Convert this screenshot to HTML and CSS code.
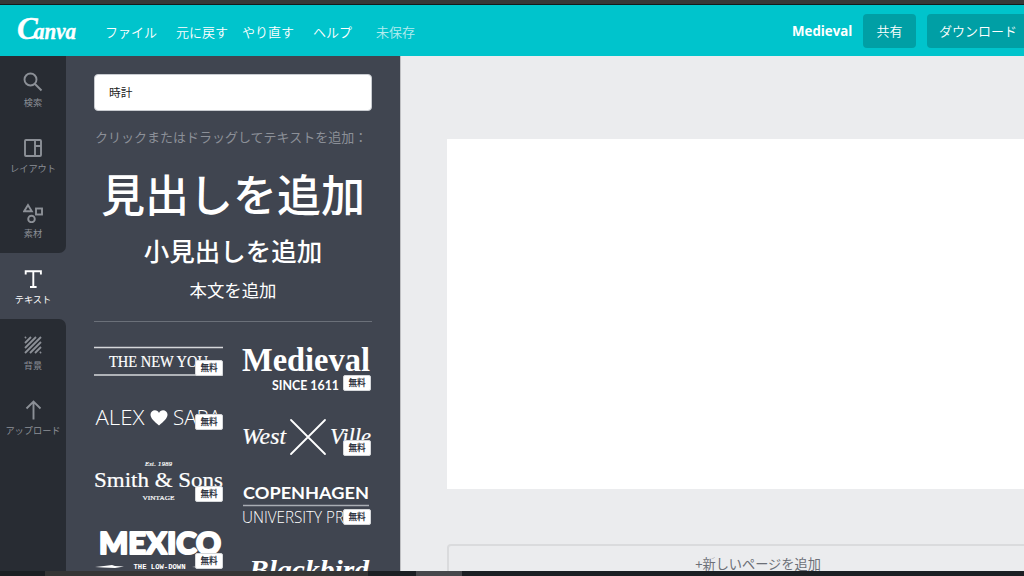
FILE: index.html
```html
<!DOCTYPE html>
<html lang="ja">
<head>
    <meta charset="UTF-8">
    <meta name="viewport" content="width=device-width, initial-scale=1.0">
    <title>Medieval</title>
    <link rel="stylesheet" href="styles.css">
</head>
<body>
    <div class="window-top"></div>
    <header class="header">
        <svg class="logo" width="62" height="40" viewBox="0 0 62 40">
            <text class="logo-text" y="28"><tspan font-size="31">C</tspan><tspan x="17" font-size="23" textLength="42" lengthAdjust="spacingAndGlyphs">anva</tspan></text>
        </svg>
        <nav class="menu">
            <a class="file">ファイル</a>
            <a class="undo">元に戻す</a>
            <a class="redo">やり直す</a>
            <a class="help">ヘルプ</a>
            <span class="unsaved">未保存</span>
        </nav>
        <div class="actions">
            <span class="design-name">Medieval</span>
            <button class="btn share">共有</button>
            <button class="btn download">ダウンロード</button>
        </div>
    </header>

    <main class="editor">
        <div class="sidebar">
            <div class="tabs tabs-above">
                <div class="tab">
                    <svg width="20" height="20" viewBox="0 0 20 20"><circle cx="7.5" cy="7.5" r="6"/><path d="M12 12l6.5 6.5"/></svg>
                    <span>検索</span>
                </div>
                <div class="tab">
                    <svg width="20" height="20" viewBox="0 0 20 20"><rect x="2" y="2" width="16" height="16" rx="1"/><path d="M12 2v16M12 8h6"/></svg>
                    <span>レイアウト</span>
                </div>
                <div class="tab">
                    <svg width="20" height="20" viewBox="0 0 20 20"><path d="M5 2L1.2 8.2h7.6z"/><rect x="13" y="5.5" width="6" height="6"/><circle cx="8.500" cy="16" r="3.300"/></svg>
                    <span>素材</span>
                </div>
            </div>
            <div class="tab active">
                <svg width="20" height="20" viewBox="0 0 20 20"><path d="M2.7 5.5V2.2h15.2v3.3M10.3 2v16M7 18h6.6"/></svg>
                <span>テキスト</span>
            </div>
            <div class="tabs tabs-below">
                <div class="tab">
                    <svg width="20" height="20" viewBox="0 0 20 20"><path d="M2 3l1-1M2 8l6-6M2 13L13 2M2 18L18 2M7 18L18 7M12 18l6-6M17 18l1-1"/></svg>
                    <span>背景</span>
                </div>
                <div class="tab">
                    <svg width="20" height="20" viewBox="0 0 20 20"><path d="M10.500 19.500V2M3.500 8.500l7-7 7 7"/></svg>
                    <span>アップロード</span>
                </div>
            </div>
        </div>

        <div class="panel">
            <input class="search" type="text" value="時計">
            <p class="hint">クリックまたはドラッグしてテキストを追加：</p>
            <div class="add-heading">見出しを追加</div>
            <div class="add-subheading">小見出しを追加</div>
            <div class="add-body">本文を追加</div>
            <div class="templates">
                <div class="column">
                    <div class="template new-you">
                        <svg width="129" height="30" viewBox="0 0 129 30">
                            <path d="M0 1.500h129M0 29h129" stroke="#d5d7da" stroke-width="1.500"/>
                            <text class="serif" x="15" y="21" font-size="17" textLength="99" lengthAdjust="spacingAndGlyphs">THE NEW YOU</text>
                        </svg>
                        <span class="badge">無料</span>
                    </div>
                    <div class="template alex">
                        <svg width="129" height="22" viewBox="0 0 129 22">
                            <text class="light" x="1.500" y="17" font-size="20" textLength="49" lengthAdjust="spacingAndGlyphs">ALEX</text>
                            <path d="M65 17.500C60.500 13.500 56.500 10.500 56.500 6.500c0-5 7-6 8.500-1.500C66.500.500 73.500 1.500 73.500 6.500c0 4-4 7-8.500 11z" fill="#fff"/>
                            <text class="light" x="79" y="17" font-size="20" textLength="48" lengthAdjust="spacingAndGlyphs">SARA</text>
                        </svg>
                        <span class="badge">無料</span>
                    </div>
                    <div class="template smith">
                        <svg width="129" height="44" viewBox="0 0 129 44">
                            <text class="serif italic" x="51" y="7.500" font-size="6.500" textLength="27">Est. 1989</text>
                            <text class="serif" x="0" y="28.500" font-size="21" textLength="129" lengthAdjust="spacingAndGlyphs">Smith &amp; Sons</text>
                            <text class="serif" x="48.500" y="41.500" font-size="6.800" textLength="32" lengthAdjust="spacingAndGlyphs">VINTAGE</text>
                        </svg>
                        <span class="badge">無料</span>
                    </div>
                    <div class="template mexico">
                        <svg width="129" height="39" viewBox="0 0 129 39">
                            <text class="heavy" x="5" y="24" font-size="31" textLength="122" lengthAdjust="spacingAndGlyphs">MEXICO</text>
                            <path d="M1 37l9-1 8-1 3 1 9 .500-9 1.500-12-.500zM98 37l8-1 8 1-8 .500z" fill="#fff"/>
                            <text class="mono" x="39.500" y="38.500" font-size="8" textLength="52" lengthAdjust="spacingAndGlyphs">THE LOW-DOWN</text>
                        </svg>
                        <span class="badge">無料</span>
                    </div>
                </div>
                <div class="column">
                    <div class="template medieval">
                        <svg width="129" height="45" viewBox="0 0 129 45">
                            <text class="blackletter" x="0" y="25" font-size="34" textLength="128" lengthAdjust="spacingAndGlyphs">Medieval</text>
                            <text class="bold" x="30" y="44" font-size="13" textLength="67" lengthAdjust="spacingAndGlyphs">SINCE 1611</text>
                        </svg>
                        <span class="badge">無料</span>
                    </div>
                    <div class="template west">
                        <svg width="129" height="37" viewBox="0 0 129 37">
                            <text class="serif italic" x="0" y="25" font-size="23" textLength="44" lengthAdjust="spacingAndGlyphs">West</text>
                            <path d="M49 1l34 34M83 1L49 35" stroke="#fff" stroke-width="1.800" stroke-linecap="round"/>
                            <text class="serif italic" x="88" y="25" font-size="23" textLength="41" lengthAdjust="spacingAndGlyphs">Ville</text>
                        </svg>
                        <span class="badge">無料</span>
                    </div>
                    <div class="template copenhagen">
                        <svg width="129" height="40" viewBox="0 0 129 40">
                            <text class="bold" x="1" y="14" font-size="17.500" textLength="126" lengthAdjust="spacingAndGlyphs">COPENHAGEN</text>
                            <path d="M1 20.500h126" stroke="#a9adb3" stroke-width="1.300"/>
                            <text class="light" x="0" y="37.500" font-size="16" textLength="127" lengthAdjust="spacingAndGlyphs">UNIVERSITY PRESS</text>
                        </svg>
                        <span class="badge">無料</span>
                    </div>
                    <div class="template blackbird">
                        <svg width="129" height="30" viewBox="0 0 129 30">
                            <text class="script" x="7" y="23" font-size="27" textLength="120" lengthAdjust="spacingAndGlyphs">Blackbird</text>
                        </svg>
                    </div>
                </div>
            </div>
        </div>

        <div class="workspace">
            <div class="page"></div>
            <div class="add-page">+新しいページを追加</div>
        </div>
    </main>
    <footer class="taskbar"><span class="task-left"></span><span class="task-active"></span></footer>
</body>
</html>
```
FILE: styles.css
```css
* {
    box-sizing: border-box;
}
body {
    margin: 0;
    width: 1024px;
    height: 576px;
    overflow: hidden;
    display: flex;
    flex-direction: column;
    background-color: #ebecee;
    color: white;
    font-family: "Noto Sans CJK JP", sans-serif;
    font-size: 13px;
}
.window-top {
    height: 5px;
    flex: none;
    background-color: #383838;
    border-bottom: 1px solid #171b1c;
}
.header {
    height: 51px;
    flex: none;
    display: flex;
    align-items: center;
    background-color: #00c4cc;
    padding-left: 17px;
    white-space: nowrap;
}
.logo {
    flex: none;
    margin-right: 26px;
}
.logo-text {
    font-family: "Liberation Serif", serif;
    font-style: italic;
    font-weight: bold;
    fill: white;
    stroke: white;
    stroke-width: 0.4;
}
.menu {
    display: flex;
    font-weight: 350;
    padding-top: 2px;
}
.undo {
    margin-left: 19px;
}
.redo {
    margin-left: 14px;
}
.help {
    margin-left: 19px;
}
.unsaved {
    margin-left: 24px;
    opacity: 0.7;
}
.actions {
    display: flex;
    align-items: center;
    margin-left: auto;
    width: 232px;
}
.design-name {
    flex: none;
    width: 71px;
    font-family: "Open Sans", sans-serif;
    font-weight: bold;
    font-size: 13.3px;
}
.btn {
    flex: none;
    height: 34px;
    border: none;
    border-radius: 4px;
    background-color: #009fa5;
    color: white;
    font-family: inherit;
    font-size: 13px;
    font-weight: 350;
    padding: 0;
}
.share {
    width: 53px;
}
.download {
    width: 110px;
    margin-left: 11px;
    padding-right: 8px;
}

.editor {
    flex: 1;
    min-height: 0;
    display: flex;
}
.sidebar {
    width: 66px;
    flex: none;
    display: flex;
    flex-direction: column;
    background-color: #404550;
}
.tabs {
    background-color: #282c33;
}
.tabs-above {
    border-bottom-right-radius: 7px;
}
.tabs-below {
    flex: 1;
    border-top-right-radius: 7px;
}
.tab {
    height: 65.7px;
    display: flex;
    flex-direction: column;
    align-items: center;
    padding-top: 16px;
    color: #8c9097;
    font-size: 9.2px;
    line-height: 14px;
    white-space: nowrap;
}
.tab svg {
    fill: none;
    stroke: currentColor;
    stroke-width: 1.9;
    margin: 0 1px 3px 0;
}
.tab.active {
    color: white;
}

.panel {
    width: 334px;
    flex: none;
    overflow: hidden;
    background-color: #404550;
    padding: 18px 28px 0;
    text-align: center;
    white-space: nowrap;
}
.search {
    display: block;
    width: 278px;
    height: 37px;
    border: 1px solid #c8cbd0;
    border-radius: 4px;
    padding: 0 14px 3px;
    background-color: white;
    color: #222;
    font-family: inherit;
    font-size: 11.7px;
}
.hint {
    margin: 16px 0 0;
    height: 20px;
    line-height: 20px;
    padding-left: 1px;
    text-align: left;
    color: #8c9098;
    font-size: 13px;
    font-weight: 400;
}
.add-heading {
    height: 58px;
    margin-top: 17px;
    line-height: 58px;
    font-size: 44px;
    font-weight: 500;
}
.add-subheading {
    height: 36px;
    margin-top: 10px;
    line-height: 36px;
    font-size: 25.5px;
    font-weight: 500;
}
.add-body {
    height: 54px;
    padding-top: 9px;
    line-height: 26px;
    font-size: 17.4px;
    border-bottom: 1px solid #6b7079;
}
.templates {
    display: flex;
    gap: 19px;
    padding-top: 24px;
}
.column {
    width: 129px;
}
.template {
    position: relative;
    margin-bottom: 28px;
}
.template svg {
    display: block;
    overflow: visible;
}
.template text {
    fill: white;
}
.new-you {
    margin-bottom: 32px;
}
.mexico {
    margin-bottom: 0;
}
.west {
    margin-bottom: 29px;
}
.copenhagen {
    margin-bottom: 31px;
}
.badge {
    position: absolute;
    right: 0;
    bottom: 0;
    width: 28px;
    height: 16px;
    border: 1px solid #d5d7da;
    border-radius: 2px;
    background-color: white;
    color: #333844;
    font-size: 8.6px;
    font-weight: bold;
    line-height: 13px;
}
.serif {
    font-family: "Liberation Serif", serif;
    stroke: white;
    stroke-width: 0.2;
}
.italic {
    font-style: italic;
}
.light {
    font-family: "Open Sans", sans-serif;
    font-weight: 300;
}
.bold {
    font-family: Lato, sans-serif;
    font-weight: bold;
}
.heavy {
    font-family: Lato, sans-serif;
    font-weight: 900;
    stroke: white;
    stroke-width: 2.2;
    stroke-linejoin: round;
}
.mono {
    font-family: "Liberation Mono", monospace;
    font-weight: bold;
}
.blackletter {
    font-family: "Liberation Serif", serif;
    font-weight: bold;
}
.script {
    font-family: "Liberation Serif", serif;
    font-style: italic;
    font-weight: bold;
}

.workspace {
    flex: 1;
    min-width: 0;
    overflow: hidden;
    border-left: 1px solid #bfc0c3;
    padding: 83px 0 0 46px;
}
.page {
    height: 350px;
    background-color: white;
}
.add-page {
    width: 622px;
    height: 60px;
    margin-top: 55px;
    padding-top: 8px;
    border: 2px solid #dadbdd;
    border-radius: 4px;
    text-align: center;
    color: #6b6f77;
    font-size: 13.2px;
    line-height: 20px;
}
.taskbar {
    height: 5px;
    flex: none;
    display: flex;
    background-color: #1b1f23;
}
.task-left {
    width: 323px;
    margin-left: 45px;
    background-color: #353535;
}
.task-active {
    width: 46px;
    margin-left: 48px;
    background-color: #46474b;
}
```
